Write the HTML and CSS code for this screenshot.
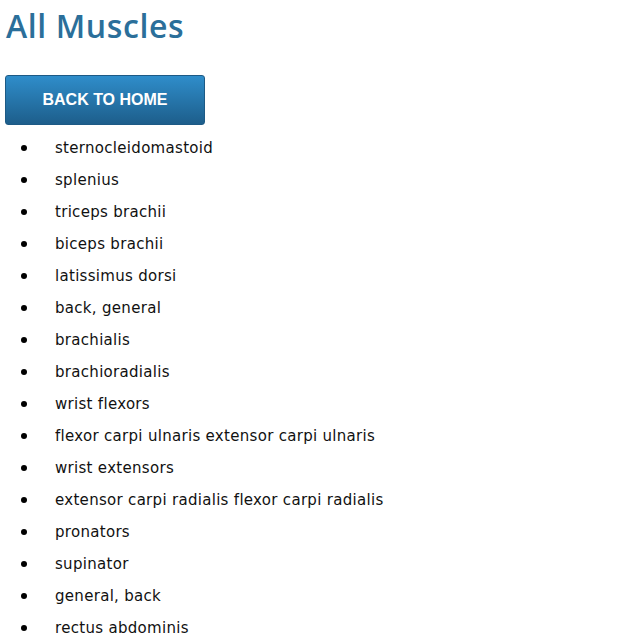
FILE: index.html
```html
<!DOCTYPE html>
<html>
<head>
<meta charset="utf-8">
<link rel="stylesheet" href="styles.css">
</head>
<body>
<h1 class="title">All Muscles</h1>
<button class="back-btn">BACK TO HOME</button>
<ul class="muscle-list">
  <li>sternocleidomastoid</li>
  <li>splenius</li>
  <li>triceps brachii</li>
  <li>biceps brachii</li>
  <li>latissimus dorsi</li>
  <li>back, general</li>
  <li>brachialis</li>
  <li>brachioradialis</li>
  <li>wrist flexors</li>
  <li>flexor carpi ulnaris extensor carpi ulnaris</li>
  <li>wrist extensors</li>
  <li>extensor carpi radialis flexor carpi radialis</li>
  <li>pronators</li>
  <li>supinator</li>
  <li>general, back</li>
  <li>rectus abdominis</li>
</ul>
</body>
</html>
```
FILE: styles.css
```css
body {
  margin: 0;
  padding: 0 5px;
  font-family: "DejaVu Sans", sans-serif;
  background: #fff;
}
.title {
  margin: 6px 0 0 1px;
  font-family: "Open Sans", "DejaVu Sans", sans-serif;
  font-size: 32px;
  font-weight: 600;
  line-height: 40px;
  letter-spacing: 0.6px;
  color: #2b6f9a;
}
.back-btn {
  display: block;
  margin-top: 29px;
  width: 200px;
  height: 50px;
  border: 1px solid #1d5a85;
  border-radius: 3px;
  background: linear-gradient(#2f8dca, #1d5e8b);
  color: #fff;
  font-family: "Liberation Sans", Arial, sans-serif;
  font-weight: bold;
  font-size: 16px;
  padding: 0;
}
.muscle-list {
  list-style: none;
  margin: 7px 0 0;
  padding: 0;
  font-size: 15px;
  letter-spacing: 0.3px;
  color: #111;
}
.muscle-list li {
  display: flex;
  align-items: center;
  line-height: 32px;
}
.muscle-list li::before {
  content: "";
  width: 6px;
  height: 6px;
  border-radius: 50%;
  background: #000;
  margin: 0 28px 0 16px;
  flex-shrink: 0;
}
```
